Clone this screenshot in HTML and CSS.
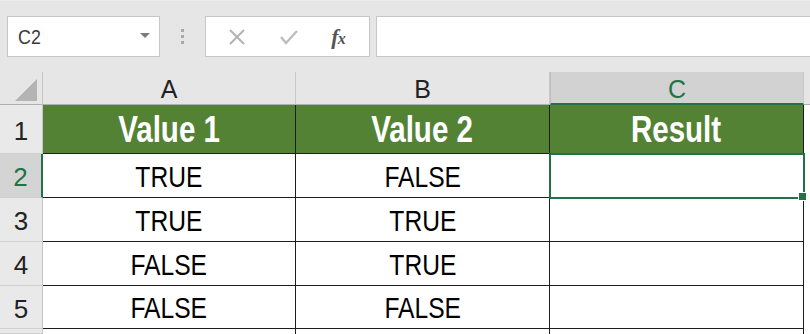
FILE: index.html
```html
<!DOCTYPE html>
<html lang="en">
<head>
  <meta charset="UTF-8">
  <title>Logical values</title>
  <link rel="stylesheet" href="styles.css">
</head>
<body>
  <div class="toolbar">
    <div class="namebox">
      <span class="nb-text">C2</span>
      <span class="nb-arrow"></span>
    </div>
    <div class="grip"><i></i><i></i><i></i></div>
    <div class="fx-buttons">
      <svg class="icon" width="18" height="18" viewBox="0 0 18 18">
        <path d="M2 2 L16 16 M16 2 L2 16" stroke="#b3b3b3" stroke-width="2" fill="none"/>
      </svg>
      <svg class="icon" width="20" height="18" viewBox="0 0 20 18">
        <path d="M2 9 L7 15 L18 3" stroke="#bdbdbd" stroke-width="2.4" fill="none"/>
      </svg>
      <span class="fx">f<small>x</small></span>
    </div>
    <div class="formula"></div>
  </div>

  <div class="sheet">
    <div class="corner"><span class="tri"></span></div>
    <div class="colhead">A</div>
    <div class="colhead">B</div>
    <div class="colhead active">C</div>
    <div class="colhead rest"></div>

    <div class="rowhead">1</div>
    <div class="cell head"><span class="txt">Value 1</span></div>
    <div class="cell head"><span class="txt">Value 2</span></div>
    <div class="cell head"><span class="txt">Result</span></div>
    <div class="blank"></div>

    <div class="rowhead active">2</div>
    <div class="cell"><span class="txt">TRUE</span></div>
    <div class="cell"><span class="txt">FALSE</span></div>
    <div class="cell sel"></div>
    <div class="blank"></div>

    <div class="rowhead">3</div>
    <div class="cell"><span class="txt">TRUE</span></div>
    <div class="cell"><span class="txt">TRUE</span></div>
    <div class="cell"></div>
    <div class="blank"></div>

    <div class="rowhead">4</div>
    <div class="cell"><span class="txt">FALSE</span></div>
    <div class="cell"><span class="txt">TRUE</span></div>
    <div class="cell"></div>
    <div class="blank"></div>

    <div class="rowhead">5</div>
    <div class="cell"><span class="txt">FALSE</span></div>
    <div class="cell"><span class="txt">FALSE</span></div>
    <div class="cell"></div>
    <div class="blank"></div>

    <div class="rowhead"></div>
    <div class="cell empty"></div>
    <div class="cell empty"></div>
    <div class="cell empty"></div>
    <div class="blank"></div>
  </div>
</body>
</html>
```

FILE: styles.css
```css
* {
  box-sizing: border-box;
}

body {
  margin: 0;
  width: 810px;
  height: 334px;
  overflow: hidden;
  background: #e6e6e6;
  font-family: "Liberation Sans", Arial, sans-serif;
}

/* formula bar */
.toolbar {
  display: flex;
  align-items: flex-start;
  height: 72px;
  padding: 15px 0 0 7px;
  border-top: 1px solid #ececec;
}

.namebox {
  display: flex;
  align-items: center;
  justify-content: space-between;
  width: 153px;
  height: 41px;
  background: #fff;
  border: 1px solid #c6c6c6;
  padding: 0 9px 0 10px;
}

.nb-text {
  display: inline-block;
  font-size: 21px;
  color: #3a3a3a;
  transform: scaleX(.85);
  transform-origin: left center;
}

.nb-arrow {
  width: 0;
  height: 0;
  border-left: 5px solid transparent;
  border-right: 5px solid transparent;
  border-top: 5px solid #7a7a7a;
  margin-bottom: 2px;
}

.grip {
  display: flex;
  flex-direction: column;
  gap: 3px;
  width: 45px;
  align-items: center;
  padding-top: 13px;
}

.grip i {
  width: 3px;
  height: 3px;
  background: #a8a8a8;
}

.fx-buttons {
  display: flex;
  align-items: center;
  justify-content: space-around;
  width: 165px;
  height: 41px;
  background: #fff;
  border: 1px solid #c6c6c6;
  padding: 0 8px 0 6px;
}

.icon {
  display: block;
}

.fx {
  font-family: "Liberation Serif", "Times New Roman", serif;
  font-style: italic;
  font-weight: bold;
  font-size: 22px;
  color: #555;
  letter-spacing: -1px;
}

.fx small {
  font-size: 16px;
}

.formula {
  flex: 1;
  height: 41px;
  margin-left: 6px;
  background: #fff;
  border: 1px solid #c6c6c6;
  border-right: none;
}

/* worksheet */
.sheet {
  display: grid;
  grid-template-columns: 43px 253px 254px 254px 1fr;
  grid-template-rows: 33px 49px 44px 44px 44px 43px 1fr;
  height: 262px;
  background: #fff;
}

.corner {
  background: #e6e6e6;
  border-right: 1px solid #c6c6c6;
  border-bottom: 1px solid #b0b0b0;
  position: relative;
}

.tri {
  position: absolute;
  left: 15px;
  top: 7px;
  width: 0;
  height: 0;
  border-left: 22px solid transparent;
  border-bottom: 22px solid #b4b4b4;
}

.colhead {
  display: flex;
  align-items: center;
  justify-content: center;
  padding-top: 3px;
  background: #e6e6e6;
  border-right: 1px solid #c8c8c8;
  border-bottom: 1px solid #b0b0b0;
  font-size: 25px;
  color: #222;
}

.colhead.active {
  background: #d2d2d2;
  color: #217346;
  border-left: 1px solid #bdbdbd;
  border-bottom: 2px solid #217346;
}

.colhead.rest {
  border-right: none;
}

.rowhead {
  display: flex;
  align-items: center;
  justify-content: center;
  padding-top: 4px;
  background: #e9e9e9;
  border-right: 1px solid #c6c6c6;
  border-bottom: 1px solid #d0d0d0;
  font-size: 26px;
  color: #222;
}

.rowhead.active {
  background: #d4d4d4;
  color: #217346;
  border-right: 2px solid #217346;
}

.cell {
  display: flex;
  align-items: center;
  justify-content: center;
  border-right: 1px solid #1e1e1e;
  border-bottom: 1px solid #1e1e1e;
  font-size: 30px;
  color: #000;
  padding-top: 2px;
}

.cell.head {
  background: #548235;
  color: #fff;
  font-weight: bold;
  font-size: 36px;
}

.cell.empty {
  border-bottom: none;
}

.txt {
  display: inline-block;
  transform: scaleX(.82);
}

.cell.sel {
  position: relative;
  outline: 2px solid #217346;
  outline-offset: -1px;
}

.cell.sel::after {
  content: "";
  position: absolute;
  right: -4px;
  bottom: -4px;
  width: 7px;
  height: 7px;
  background: #217346;
  border: 1px solid #fff;
}

.blank {
  background: #fff;
}
```
